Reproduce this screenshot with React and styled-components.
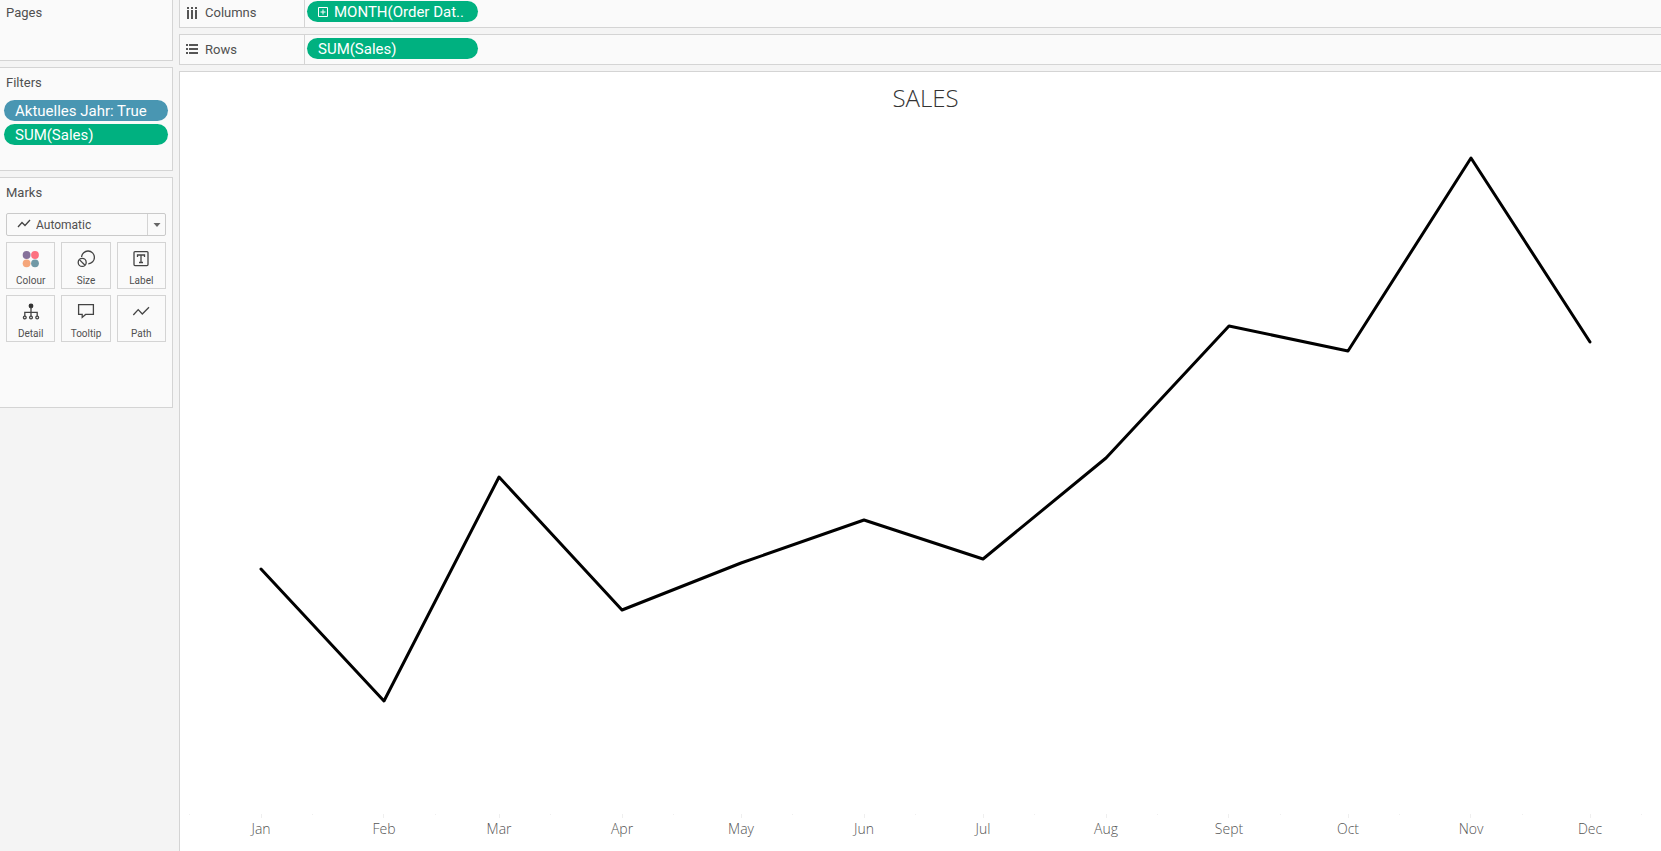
import React from "react";
import styled, { createGlobalStyle } from "styled-components";

const GlobalStyle = createGlobalStyle`
  *, *::before, *::after { box-sizing: border-box; }
  body {
    margin: 0;
    background: #f4f4f4;
    color: #505050;
    font-family: Roboto, "Liberation Sans", sans-serif;
    font-size: 13px;
    line-height: 16px;
  }
  button, select { font: inherit; color: inherit; margin: 0; }
`;

const colors = {
  border: "#d4d4d4",
  panel: "#fafafa",
  green: "#00b180",
  blue: "#4996b2",
};

const Workspace = styled.div`
  display: flex;
  gap: 6px;
  min-height: 100vh;
  overflow: hidden;
`;

const Sidebar = styled.aside`
  flex: 0 0 173px;
  display: flex;
  flex-direction: column;
  gap: 6px;
`;

const Card = styled.section`
  min-height: ${(p) => p.$minHeight}px;
  padding: ${(p) => (p.$first ? 5 : 7)}px 6px 0;
  background: ${colors.panel};
  border: 1px solid ${colors.border};
  border-left: 0;
  ${(p) => p.$first && "border-top: 0;"}
`;

const CardTitle = styled.h2`
  margin: 0;
  font-size: 13px;
  line-height: 16px;
  font-weight: 400;
`;

const FilterList = styled.div`
  display: flex;
  flex-direction: column;
  gap: 3px;
  margin: 9px -2px 0;
`;

const Pill = styled.button`
  display: flex;
  align-items: center;
  gap: 6px;
  width: ${(p) => (p.$shelf ? "171px" : "100%")};
  height: 21px;
  padding: 0 11px;
  border: 0;
  border-radius: 11px;
  background: ${(p) => (p.$discrete ? colors.blue : colors.green)};
  color: #fff;
  font-size: 15px;
  line-height: 20px;
  white-space: nowrap;
`;

const MarkTypeField = styled.label`
  position: relative;
  display: block;
  margin-top: 12px;
  height: 23px;

  svg { position: absolute; pointer-events: none; }
`;

const MarkTypeSelect = styled.select`
  appearance: none;
  width: 100%;
  height: 100%;
  padding: 0 24px 0 29px;
  border: 1px solid #cacaca;
  border-radius: 2px;
  font-size: 12px;
  background: linear-gradient(${colors.border}, ${colors.border}) right 17px top / 1px 100% no-repeat ${colors.panel};
`;

const TypeIcon = styled.svg`
  left: 11px;
  top: 6px;
`;

const Caret = styled.svg`
  right: 5px;
  top: 9px;
`;

const MarkGrid = styled.div`
  display: grid;
  grid-template-columns: repeat(3, 1fr);
  gap: 6px;
  margin-top: 6px;
`;

const MarkButton = styled.button`
  display: flex;
  flex-direction: column;
  align-items: center;
  justify-content: space-between;
  height: 47px;
  padding: 7px 0 1px;
  border: 1px solid ${colors.border};
  background: ${colors.panel};
  font-size: 10px;
  line-height: 12px;
`;

const Main = styled.main`
  flex: 1;
  min-width: 0;
  display: flex;
  flex-direction: column;
  gap: 6px;
`;

const Shelf = styled.section`
  display: flex;
  height: ${(p) => (p.$first ? 28 : 31)}px;
  padding-bottom: ${(p) => (p.$first ? 4 : 2)}px;
  align-items: center;
  background: linear-gradient(${colors.border}, ${colors.border}) 124px 0 / 1px 100% no-repeat ${colors.panel};
  border: 1px solid ${colors.border};
  border-right: 0;
  ${(p) => p.$first && "border-top: 0;"}
`;

const ShelfTitle = styled.h2`
  flex: 0 0 127px;
  display: flex;
  align-items: center;
  gap: 7px;
  margin: 0;
  padding: 2px 0 0 6px;
  font-size: 13px;
  line-height: 16px;
  font-weight: 400;
`;

const Sheet = styled.section`
  flex: 1;
  display: flex;
  flex-direction: column;
  background: #fff;
  border: 1px solid ${colors.border};
  border-right: 0;
  border-bottom: 0;
`;

const SheetTitle = styled.h1`
  margin: 11px 0 0;
  padding-left: 10px;
  text-align: center;
  font-family: "Open Sans", "Noto Sans", sans-serif;
  font-weight: 300;
  font-size: 24px;
  line-height: 30px;
  color: #333;
`;

const Plot = styled.div`
  flex: 1;
  display: flex;
  flex-direction: column;
  padding: 7px 71px 12px 81px;
`;

const LineArea = styled.div`
  flex: 1;
  min-height: 200px;
  display: grid;
  grid-template-rows: minmax(0, 1fr);
  contain: size;
`;

const Stretch = styled.svg`
  display: block;
  width: 100%;
  height: ${(p) => p.$height};
  overflow: visible;
`;

const Axis = styled.div`
  display: flex;
  margin-top: 1px;
`;

const AxisCell = styled.div`
  flex: ${(p) => p.$days} 0 0;
`;

const AxisLabel = styled.span`
  display: flex;
  justify-content: center;
  width: 0;
  white-space: nowrap;
  font-family: "Open Sans", "Noto Sans", sans-serif;
  font-weight: 300;
  font-size: 14px;
  line-height: 20px;
  color: #555;
`;

const months = [
  { name: "Jan", days: 31, value: 245 },
  { name: "Feb", days: 29, value: 113 },
  { name: "Mar", days: 31, value: 337 },
  { name: "Apr", days: 30, value: 204 },
  { name: "May", days: 31, value: 251 },
  { name: "Jun", days: 30, value: 294 },
  { name: "Jul", days: 31, value: 255 },
  { name: "Aug", days: 31, value: 356 },
  { name: "Sept", days: 30, value: 488 },
  { name: "Oct", days: 31, value: 463 },
  { name: "Nov", days: 30, value: 656 },
  { name: "Dec", days: 0, value: 472 },
];

const starts = months.map((_, i) =>
  months.slice(0, i).reduce((sum, m) => sum + m.days, 0)
);
const SPAN = 335;
const TOP = 694;

function LineChart() {
  const points = months.map((m, i) => `${starts[i]},${TOP - m.value}`).join(" ");
  return (
    <Plot>
      <LineArea>
        <Stretch
          $height="100%"
          viewBox={`0 0 ${SPAN} ${TOP}`}
          preserveAspectRatio="none"
          role="img"
          aria-label="Sales by month"
        >
          <polyline
            points={points}
            fill="none"
            stroke="#000"
            strokeWidth="3"
            strokeLinecap="round"
            strokeLinejoin="round"
            vectorEffect="non-scaling-stroke"
          />
        </Stretch>
      </LineArea>
      <Stretch $height="4px" viewBox={`0 0 ${SPAN} 4`} preserveAspectRatio="none" aria-hidden="true">
        <g stroke="#efefef" strokeWidth="1" shapeRendering="crispEdges">
          {[-18, ...starts.map((d) => d + 13)].map((d) => (
            <line key={`minor${d}`} x1={d} x2={d} y1="0" y2="1" vectorEffect="non-scaling-stroke" />
          ))}
          {starts.map((d) => (
            <line key={d} x1={d} x2={d} y1="0" y2="4" vectorEffect="non-scaling-stroke" />
          ))}
        </g>
      </Stretch>
      <Axis>
        {months.map((m) => (
          <AxisCell key={m.name} $days={m.days}>
            <AxisLabel>{m.name}</AxisLabel>
          </AxisCell>
        ))}
      </Axis>
    </Plot>
  );
}

const ColumnsIcon = () => (
  <svg width="12" height="12" viewBox="0 0 12 12" fill="#555" aria-hidden="true">
    {[1, 5, 9].map((x) => (
      <g key={x}>
        <rect x={x} y="0" width="2" height="2" />
        <rect x={x} y="3" width="2" height="9" />
      </g>
    ))}
  </svg>
);

const RowsIcon = () => (
  <svg width="12" height="12" viewBox="0 0 12 12" fill="#555" aria-hidden="true">
    {[0, 4, 8].map((y) => (
      <g key={y}>
        <rect x="0" y={y} width="2" height="2" />
        <rect x="3" y={y} width="9" height="2" />
      </g>
    ))}
  </svg>
);

const ExpandIcon = () => (
  <svg width="10" height="10" viewBox="0 0 10 10" fill="none" stroke="#fff" aria-hidden="true">
    <path d="M.5 .5H9.5V9.5H.5ZM5 2.5V7.5M2.5 5H7.5" />
  </svg>
);

const iconProps = {
  width: 18,
  height: 18,
  viewBox: "0 0 18 18",
  fill: "none",
  stroke: "#444",
  strokeWidth: 1.3,
  "aria-hidden": true,
};

const marks = [
  {
    name: "Colour",
    icon: (
      <svg {...iconProps} stroke="none">
        <circle cx="4.6" cy="5" r="3.9" fill="#86719a" />
        <circle cx="13" cy="5" r="3.9" fill="#fd7180" />
        <circle cx="4.6" cy="13.3" r="3.9" fill="#f5a67b" />
        <circle cx="13" cy="13.3" r="3.9" fill="#7199a6" />
      </svg>
    ),
  },
  {
    name: "Size",
    icon: (
      <svg {...iconProps}>
        <path d="M4.6 7A6.4 6.4 0 1 1 11.3 13.8" />
        <circle cx="5.2" cy="12.4" r="4" />
        <path d="M2.4 9.6L8 15.2" />
      </svg>
    ),
  },
  {
    name: "Label",
    icon: (
      <svg {...iconProps}>
        <rect x="2" y="1.6" width="14" height="14" rx="1" />
        <path d="M5.5 7V5H12.5V7M9 5V12.5M7 12.5H11" />
      </svg>
    ),
  },
  {
    name: "Detail",
    icon: (
      <svg {...iconProps}>
        <circle cx="9" cy="3" r="2.4" fill="#333" stroke="none" />
        <path d="M9 4V14M2.8 13.5V9.3H15.2V13.5" />
        <g fill={colors.panel}>
          <circle cx="2.8" cy="14.5" r="1.4" />
          <circle cx="9" cy="14.5" r="1.4" />
          <circle cx="15.2" cy="14.5" r="1.4" />
        </g>
      </svg>
    ),
  },
  {
    name: "Tooltip",
    icon: (
      <svg {...iconProps}>
        <path d="M1.6 1.6H16.4V11.4H8.6L5.2 14.4V11.4H1.6Z" />
      </svg>
    ),
  },
  {
    name: "Path",
    icon: (
      <svg {...iconProps}>
        <path d="M1.3 12L6.2 6.6L10.3 11L17 4.2" />
      </svg>
    ),
  },
];

export default function App() {
  return (
    <>
      <GlobalStyle />
      <Workspace>
        <Sidebar>
          <Card $first $minHeight={61}>
            <CardTitle>Pages</CardTitle>
          </Card>
          <Card $minHeight={104}>
            <CardTitle>Filters</CardTitle>
            <FilterList>
              <Pill type="button" $discrete>Aktuelles Jahr: True</Pill>
              <Pill type="button">SUM(Sales)</Pill>
            </FilterList>
          </Card>
          <Card $minHeight={231}>
            <CardTitle>Marks</CardTitle>
            <MarkTypeField>
              <MarkTypeSelect aria-label="Mark type" defaultValue="Automatic">
                <option>Automatic</option>
              </MarkTypeSelect>
              <TypeIcon width="14" height="10" viewBox="0 0 14 10" fill="none" stroke="#444" strokeWidth="1.3" aria-hidden="true">
                <path d="M1 8L5 3.5L8 6.5L13 1" />
              </TypeIcon>
              <Caret width="8" height="6" viewBox="0 0 8 6" fill="#666" aria-hidden="true">
                <path d="M.5 1H7.5L4 5Z" />
              </Caret>
            </MarkTypeField>
            <MarkGrid>
              {marks.map((m) => (
                <MarkButton key={m.name} type="button">
                  {m.icon}
                  {m.name}
                </MarkButton>
              ))}
            </MarkGrid>
          </Card>
        </Sidebar>
        <Main>
          <Shelf $first>
            <ShelfTitle><ColumnsIcon />Columns</ShelfTitle>
            <Pill type="button" $shelf><ExpandIcon />MONTH(Order Dat..</Pill>
          </Shelf>
          <Shelf>
            <ShelfTitle><RowsIcon />Rows</ShelfTitle>
            <Pill type="button" $shelf>SUM(Sales)</Pill>
          </Shelf>
          <Sheet>
            <SheetTitle>SALES</SheetTitle>
            <LineChart />
          </Sheet>
        </Main>
      </Workspace>
    </>
  );
}
